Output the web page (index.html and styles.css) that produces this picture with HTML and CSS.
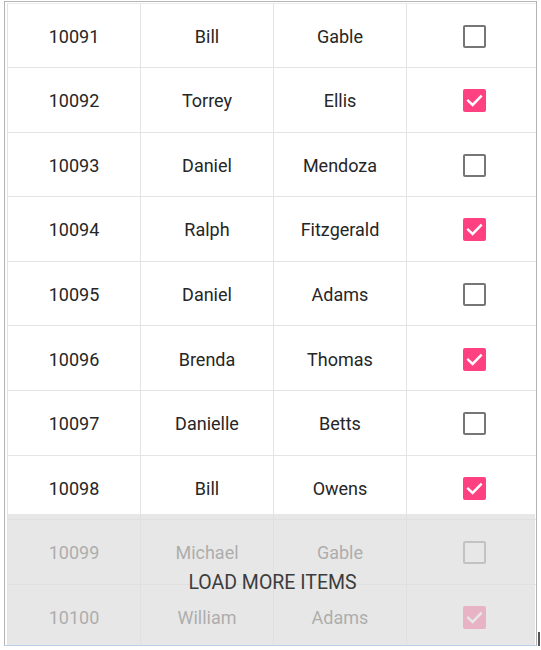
FILE: index.html
```html
<!DOCTYPE html>
<html>
<head>
<meta charset="utf-8">
<link rel="stylesheet" href="styles.css">
</head>
<body>
<div class="frame">
  <div class="grid">
    <div class="row"><div class="cell">10091</div><div class="cell">Bill</div><div class="cell">Gable</div><div class="cell"><span class="cb"></span></div></div>
    <div class="row"><div class="cell">10092</div><div class="cell">Torrey</div><div class="cell">Ellis</div><div class="cell"><span class="cb on"><svg viewBox="0 0 22 22"><polyline points="5,11.3 9.2,15.3 17,7.3"/></svg></span></div></div>
    <div class="row"><div class="cell">10093</div><div class="cell">Daniel</div><div class="cell">Mendoza</div><div class="cell"><span class="cb"></span></div></div>
    <div class="row"><div class="cell">10094</div><div class="cell">Ralph</div><div class="cell">Fitzgerald</div><div class="cell"><span class="cb on"><svg viewBox="0 0 22 22"><polyline points="5,11.3 9.2,15.3 17,7.3"/></svg></span></div></div>
    <div class="row"><div class="cell">10095</div><div class="cell">Daniel</div><div class="cell">Adams</div><div class="cell"><span class="cb"></span></div></div>
    <div class="row"><div class="cell">10096</div><div class="cell">Brenda</div><div class="cell">Thomas</div><div class="cell"><span class="cb on"><svg viewBox="0 0 22 22"><polyline points="5,11.3 9.2,15.3 17,7.3"/></svg></span></div></div>
    <div class="row"><div class="cell">10097</div><div class="cell">Danielle</div><div class="cell">Betts</div><div class="cell"><span class="cb"></span></div></div>
    <div class="row"><div class="cell">10098</div><div class="cell">Bill</div><div class="cell">Owens</div><div class="cell"><span class="cb on"><svg viewBox="0 0 22 22"><polyline points="5,11.3 9.2,15.3 17,7.3"/></svg></span></div></div>
    <div class="row"><div class="cell">10099</div><div class="cell">Michael</div><div class="cell">Gable</div><div class="cell"><span class="cb"></span></div></div>
    <div class="row"><div class="cell">10100</div><div class="cell">William</div><div class="cell">Adams</div><div class="cell"><span class="cb on"><svg viewBox="0 0 22 22"><polyline points="5,11.3 9.2,15.3 17,7.3"/></svg></span></div></div>
  </div>
  <div class="loadmore">LOAD MORE ITEMS</div>
</div>
<div class="caret"></div>
</body>
</html>
```
FILE: styles.css
```css
html, body {
  margin: 0;
  padding: 0;
  background: #ffffff;
}
body {
  position: relative;
  width: 541px;
  height: 650px;
  overflow: hidden;
  font-family: Roboto, "Liberation Sans", sans-serif;
}
.frame {
  position: relative;
  box-sizing: border-box;
  margin: 1px 0 0 4px;
  width: 533px;
  height: 645px;
  border: 1px solid #b4b4b4;
  border-bottom-color: #bccfea;
  overflow: hidden;
}
.grid {
  padding: 1px 0 0 2px;
}
.row {
  display: grid;
  grid-template-columns: 133px 133px 133px 133px;
  height: 64.6px;
  box-sizing: border-box;
  border-bottom: 1px solid #e4e4e4;
}
.row:first-child {
  border-top: 1px solid #ececec;
  height: 65px;
}
.cell {
  box-sizing: border-box;
  border-left: 1px solid #e4e4e4;
  display: flex;
  align-items: center;
  justify-content: center;
  padding-top: 2px;
  font-size: 18px;
  color: #262626;
}
.cb {
  box-sizing: border-box;
  display: block;
  width: 23px;
  height: 23px;
  border: 2.5px solid #767676;
  border-radius: 2px;
  margin-left: 2px;
  margin-top: 0;
}
.cb.on {
  border: none;
  background: #ff4081;
}
.cb svg {
  display: block;
  width: 23px;
  height: 23px;
}
.cb polyline {
  fill: none;
  stroke: #ffffff;
  stroke-width: 2.4;
  stroke-linecap: square;
}
.loadmore {
  position: absolute;
  left: 3px;
  right: 1px;
  top: 512px;
  bottom: 0;
  background: rgba(222, 222, 222, 0.73);
  display: flex;
  align-items: center;
  justify-content: center;
  padding-top: 5px;
  padding-left: 2px;
  font-size: 19.5px;
  color: #3c3c3c;
}
.caret {
  position: absolute;
  left: 538px;
  top: 632px;
  width: 2px;
  height: 14px;
  background: #555555;
}
```
